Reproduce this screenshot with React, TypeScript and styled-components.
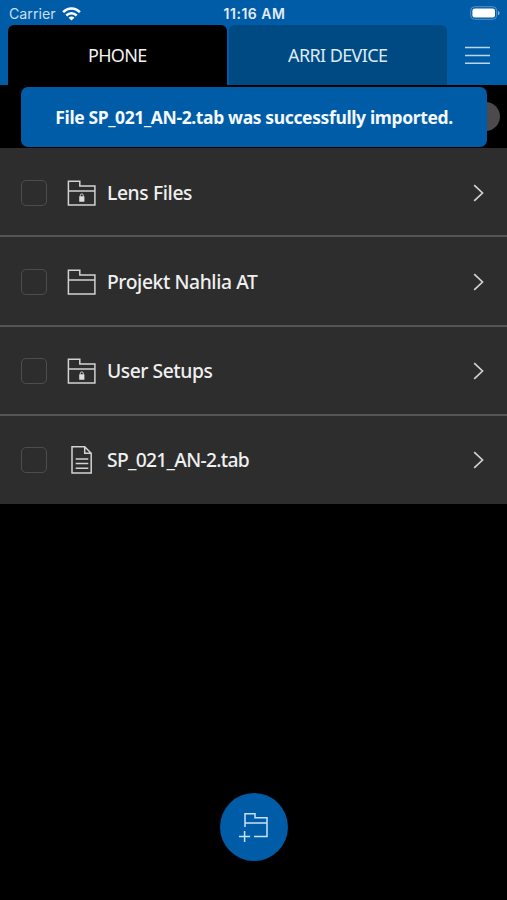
import React from "react";
import styled, { createGlobalStyle } from "styled-components";

const GlobalStyle = createGlobalStyle`
  * { box-sizing: border-box; }
  body { margin: 0; background: #000; }
  button { border: 0; padding: 0; margin: 0; background: none; color: inherit; font: inherit; }
  svg { display: block; }
`;

const Screen = styled.div`
  width: 507px;
  height: 900px;
  display: flex;
  flex-direction: column;
  overflow: hidden;
  background: #000;
  color: #f0f0f0;
  font-family: "Noto Sans", "Open Sans", sans-serif;
`;

const Header = styled.header`
  flex: none;
  height: 85px;
  background: #005ca7;
`;

const StatusBar = styled.div`
  display: grid;
  grid-template-columns: 1fr auto 1fr;
  align-items: center;
  height: 25px;
  padding: 2px 7px 0 9px;
  font: 400 14.2px/20px Inter, sans-serif;
  color: #e3edf7;
`;

const Carrier = styled.div`
  display: flex;
  align-items: center;
  gap: 6px;
  color: #c9dff2;
`;

const Clock = styled.div`
  font-size: 14px;
  font-weight: 600;
  letter-spacing: 0.5px;
`;

const BatterySlot = styled.div`
  justify-self: end;
  margin-top: -1px;
`;

const Tabs = styled.nav`
  display: flex;
  height: 60px;
  padding-left: 8px;
`;

const Tab = styled.button<{ $active?: boolean }>`
  width: 218.5px;
  margin-right: ${(p) => (p.$active ? 2 : 0)}px;
  border-radius: 6px 6px 0 0;
  background: ${(p) => (p.$active ? "#000" : "#004a84")};
  color: ${(p) => (p.$active ? "#f2f2f2" : "#dceaf5")};
  font-size: 18px;
`;

const MenuButton = styled.button`
  flex: 1;
  display: flex;
  align-items: center;
  justify-content: center;
`;

const SelectionBar = styled.div`
  position: relative;
  flex: none;
  display: flex;
  align-items: center;
  justify-content: flex-end;
  height: 63px;
  padding-right: 7px;
`;

const RoundControl = styled.div`
  width: 29px;
  height: 29px;
  border-radius: 50%;
  background: #4b4b4b;
`;

const Toast = styled.div`
  position: absolute;
  top: 2px;
  left: 21px;
  width: 466px;
  height: 60px;
  display: flex;
  align-items: center;
  justify-content: center;
  border-radius: 7px;
  background: #005ca7;
  color: #f4f9ff;
  font-size: 17.5px;
  font-weight: 700;
`;

const Fit = styled.span<{ $spacing: number }>`
  letter-spacing: ${(p) => p.$spacing}px;
  white-space: nowrap;
`;

const FileList = styled.ul`
  flex: none;
  margin: 0;
  padding: 0;
  list-style: none;
  background: #2d2d2d;
`;

const Row = styled.li`
  display: flex;
  align-items: center;
  height: 89.25px;
  padding: 2px 22px 0 21px;
  &:not(:last-child) { border-bottom: 2px solid #555; }
  &:last-child { height: 88.5px; padding-top: 0; }
`;

const Checkbox = styled.div`
  width: 26px;
  height: 26px;
  border: 1.5px solid #4d4d4d;
  border-radius: 5px;
`;

const IconSlot = styled.div`
  width: 30px;
  margin: 0 10px 0 20px;
`;

const Name = styled.div`
  flex: 1;
  font-size: 19.3px;
  font-weight: 500;
  line-height: 26px;
`;

const Footer = styled.footer`
  display: flex;
  justify-content: center;
  margin-top: auto;
  padding: 0 0 39px 1px;
`;

const AddButton = styled.button`
  display: flex;
  align-items: center;
  justify-content: center;
  width: 68px;
  height: 68px;
  border-radius: 50%;
  background: #005ca7;
`;

const WifiIcon = () => (
  <svg width="19" height="14" viewBox="0 0 19 14" fill="none" stroke="#fff" strokeWidth="2.5">
    <path d="M1.1 5.2C6 .2 13 .2 17.9 5.2" />
    <path d="M4.3 8.5C7.3 5.5 11.7 5.5 14.7 8.5" />
    <path d="M9.5 13.6L6.6 10.7C8.3 9.2 10.7 9.2 12.4 10.7Z" fill="#fff" stroke="none" />
  </svg>
);

const BatteryIcon = () => (
  <svg width="30" height="14" viewBox="0 0 30 14">
    <rect x=".7" y=".7" width="26" height="12.6" rx="4" fill="none" stroke="#5b93c6" />
    <rect x="2.4" y="2.4" width="22.6" height="9.2" rx="2.3" fill="#fff" />
    <path d="M28 4.7C30 5.5 30 8.5 28 9.3Z" fill="#82aed4" />
  </svg>
);

const MenuIcon = () => (
  <svg width="25" height="19" viewBox="0 0 25 19" stroke="#b9d5ec" strokeWidth="1.6">
    <path d="M0 1.5H25M0 9.5H25M0 17.3H25" />
  </svg>
);

const FolderIcon = ({ locked }: { locked?: boolean }) => (
  <svg width="30" height="28" viewBox="0 0 30 28" fill="none" stroke="#d2d2d2" strokeWidth="1.5">
    <path d="M1.4 2.2H12.8V7H27.9V26H1.4ZM1.4 12.1H27.9" />
    {locked && (
      <>
        <rect x="12.2" y="17.3" width="5.2" height="5.5" rx=".5" fill="#dedede" stroke="none" />
        <path d="M13.3 17.8V16.4a1.5 1.5 0 0 1 3 0V17.8" strokeWidth="1" />
      </>
    )}
  </svg>
);

const FileIcon = () => (
  <svg width="30" height="28" viewBox="0 0 30 28" fill="none" stroke="#d2d2d2" strokeWidth="1.5">
    <path d="M5 .8H17.7L24.2 7.3V27H5ZM17.7 .8V7.3H24.2" />
    <path d="M8.7 13H21.3M8.7 17.6H21.3M8.7 22.2H21.3" />
  </svg>
);

const ChevronIcon = () => (
  <svg width="14" height="18" viewBox="0 0 14 18" fill="none" stroke="#d2d2d2" strokeWidth="1.7">
    <path d="M3.2 1.2L11.5 9L3.2 16.8" />
  </svg>
);

const AddFolderIcon = () => (
  <svg width="30" height="30" viewBox="0 0 30 30" fill="none" stroke="#c5e2f7" strokeWidth="1.5">
    <path d="M6 15V1.8H16V5.8H28V24.6H15M6 11H28M0 24.6H11.2M5.6 19V30" />
  </svg>
);

type Entry = { name: string; kind: "locked" | "folder" | "file"; spacing: number };

const entries: Entry[] = [
  { name: "Lens Files", kind: "locked", spacing: -0.38 },
  { name: "Projekt Nahlia AT", kind: "folder", spacing: -0.41 },
  { name: "User Setups", kind: "locked", spacing: -0.45 },
  { name: "SP_021_AN-2.tab", kind: "file", spacing: -0.7 },
];

export default function App() {
  return (
    <>
      <GlobalStyle />
      <Screen>
        <Header>
          <StatusBar>
            <Carrier>Carrier <WifiIcon /></Carrier>
            <Clock>11:16 AM</Clock>
            <BatterySlot><BatteryIcon /></BatterySlot>
          </StatusBar>
          <Tabs>
            <Tab $active><Fit $spacing={-0.7}>PHONE</Fit></Tab>
            <Tab><Fit $spacing={-0.6}>ARRI DEVICE</Fit></Tab>
            <MenuButton aria-label="Menu"><MenuIcon /></MenuButton>
          </Tabs>
        </Header>
        <SelectionBar>
          <RoundControl />
          <Toast role="status">
            <Fit $spacing={-0.37}>File SP_021_AN-2.tab was successfully imported.</Fit>
          </Toast>
        </SelectionBar>
        <FileList>
          {entries.map((entry) => (
            <Row key={entry.name}>
              <Checkbox role="checkbox" aria-checked={false} />
              <IconSlot>
                {entry.kind === "file" ? <FileIcon /> : <FolderIcon locked={entry.kind === "locked"} />}
              </IconSlot>
              <Name><Fit $spacing={entry.spacing}>{entry.name}</Fit></Name>
              <ChevronIcon />
            </Row>
          ))}
        </FileList>
        <Footer>
          <AddButton aria-label="Add folder"><AddFolderIcon /></AddButton>
        </Footer>
      </Screen>
    </>
  );
}
